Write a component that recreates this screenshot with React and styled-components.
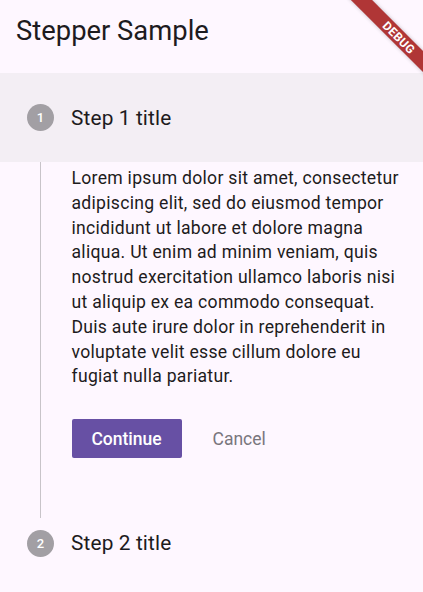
import React from "react";
import styled, { createGlobalStyle } from "styled-components";

const Global = createGlobalStyle`
  html, body { margin: 0; padding: 0; background: #fef7ff; }
  body { font-family: Roboto, "Noto Sans", sans-serif; color: #1d1b20; }
  * { box-sizing: border-box; }
`;

const Page = styled.div`
  position: relative;
  width: 423px;
  height: 592px;
  overflow: hidden;
  background: #fef7ff;
  display: flex;
  flex-direction: column;
`;

const AppBar = styled.header`
  height: 73px;
  display: flex;
  align-items: center;
  padding: 0 16px 12px;
  font-size: 27.4px;
  font-weight: 400;
  color: #1d1b20;
  letter-spacing: 0;
`;

const StepHeader = styled.div`
  display: flex;
  align-items: center;
  gap: 17px;
  padding: 0 0 0 27px;
  height: ${(p) => p.$h}px;
  background: ${(p) => (p.$active ? "#f3eef4" : "transparent")};
`;

const Circle = styled.div`
  width: 27px;
  height: 27px;
  border-radius: 50%;
  background: #a29fa4;
  color: #fff;
  font-size: 13px;
  font-weight: 500;
  display: flex;
  align-items: center;
  justify-content: center;
`;

const StepTitle = styled.div`
  font-size: 20.8px;
  color: #1d1b20;
  letter-spacing: 0.15px;
`;

const StepBody = styled.div`
  display: flex;
  margin-left: 40px;
  border-left: 1.5px solid #c8c4c9;
  padding: 4px 16px 0 30.5px;
  height: 356px;
  flex-direction: column;
`;

const Paragraph = styled.p`
  margin: 0;
  font-size: 17.6px;
  line-height: 24.8px;
  color: #1d1b20;
  letter-spacing: 0.28px;
`;

const Actions = styled.div`
  display: flex;
  align-items: center;
  gap: 10px;
  margin-top: 30px;
`;

const PrimaryButton = styled.button`
  width: 110px;
  height: 39px;
  border: none;
  border-radius: 2px;
  background: #6750a4;
  color: #fff;
  font-family: Roboto, sans-serif;
  font-size: 17.5px;
  font-weight: 500;
`;

const TextButton = styled.button`
  height: 39px;
  padding: 0 21px;
  border: none;
  background: transparent;
  color: #79767d;
  font-family: Roboto, sans-serif;
  font-size: 17.5px;
`;

const Banner = styled.div`
  position: absolute;
  top: 30px;
  right: -41px;
  width: 130px;
  height: 15px;
  background: #b03636;
  color: #fff;
  font-size: 12px;
  font-weight: 700;
  letter-spacing: 0.3px;
  display: flex;
  align-items: center;
  justify-content: center;
  transform: rotate(45deg);
  box-shadow: 0 0 4px rgba(0,0,0,0.25);
`;

export default function App() {
  return (
    <Page>
      <Global />
      <AppBar>Stepper Sample</AppBar>
      <StepHeader $active $h={89}>
        <Circle>1</Circle>
        <StepTitle>Step 1 title</StepTitle>
      </StepHeader>
      <StepBody>
        <Paragraph>
          Lorem ipsum dolor sit amet, consectetur adipiscing elit, sed do
          eiusmod tempor incididunt ut labore et dolore magna aliqua. Ut enim
          ad minim veniam, quis nostrud exercitation ullamco laboris nisi ut
          aliquip ex ea commodo consequat. Duis aute irure dolor in
          reprehenderit in voluptate velit esse cillum dolore eu fugiat nulla
          pariatur.
        </Paragraph>
        <Actions>
          <PrimaryButton>Continue</PrimaryButton>
          <TextButton>Cancel</TextButton>
        </Actions>
      </StepBody>
      <StepHeader $h={50}>
        <Circle>2</Circle>
        <StepTitle>Step 2 title</StepTitle>
      </StepHeader>
      <Banner>DEBUG</Banner>
    </Page>
  );
}
